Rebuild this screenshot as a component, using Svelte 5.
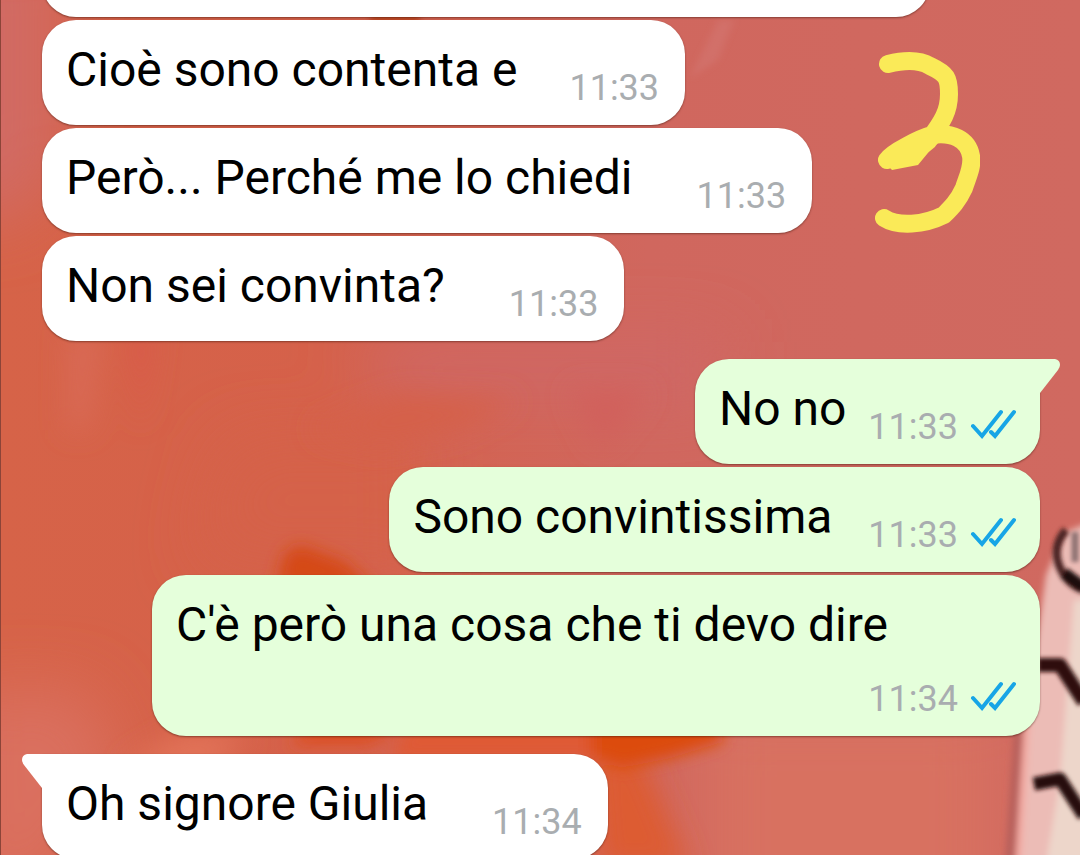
<script>
const messages = [
    { text: "Cioè sono contenta e", time: "11:33", gap: 52 },
    { text: "Però... Perché me lo chiedi", time: "11:33", gap: 64 },
    { text: "Non sei convinta?", time: "11:33", gap: 64 },
    { text: "No no", time: "11:33", gap: 22, sent: true, first: true },
    { text: "Sono convintissima", time: "11:33", gap: 36, sent: true },
    { text: "C'è però una cosa che ti devo dire", time: "11:34", gap: 28, sent: true, wrapped: true },
    { text: "Oh signore Giulia", time: "11:34", gap: 64, first: true }
];
</script>

<main>
    <svg class="wallpaper" viewBox="0 0 1080 855" preserveAspectRatio="none" aria-hidden="true">
        <defs>
            <linearGradient id="base" x1="0" y1="0" x2="1" y2="0">
                <stop offset="0" stop-color="#d66348" />
                <stop offset="0.3" stop-color="#d5614a" />
                <stop offset="0.6" stop-color="#d0675e" />
                <stop offset="1" stop-color="#d06960" />
            </linearGradient>
            <filter id="wide" x="-50%" y="-50%" width="200%" height="200%"><feGaussianBlur stdDeviation="32" /></filter>
            <filter id="soft" x="-30%" y="-30%" width="160%" height="160%"><feGaussianBlur stdDeviation="14" /></filter>
            <filter id="petal" x="-30%" y="-30%" width="160%" height="160%"><feGaussianBlur stdDeviation="8" /></filter>
            <filter id="edge" x="-30%" y="-30%" width="160%" height="160%"><feGaussianBlur stdDeviation="3" /></filter>
            <filter id="line" x="-30%" y="-30%" width="160%" height="160%"><feGaussianBlur stdDeviation="2" /></filter>
        </defs>
        <rect width="1080" height="855" fill="url(#base)" />
        <g filter="url(#wide)">
            <path d="M-60-60H60V160L20 220H-60z" fill="#d16a63" />
            <path d="M350 340H720V400H400z" fill="#cf6866" />
            <path d="M230 440H420V560H200z" fill="#d5624a" />
            <path d="M-40 690H90L120 780 40 900H-40z" fill="#da6f5f" />
            <path d="M700 700H1000V930H700z" fill="#d87161" />
        </g>
        <g filter="url(#soft)">
            <path d="M70 330H100L88 430H68z" fill="#d96b56" />
            <path d="M128 330H155L140 430z" fill="#d95a48" />
            <path d="M310 430L400 395 520 400 460 430 380 445z" fill="#d5604a" />
            <path d="M570 390H650L600 450z" fill="#d1615b" />
            <path d="M180 735H250L210 770H120z" fill="#e3745a" />
            <path d="M590 750H640L690 870H600z" fill="#dd5b33" />
        </g>
        <g filter="url(#petal)">
            <path d="M276 585L285 553 300 545 345 562 375 590z" fill="#d54a18" />
            <path d="M310 720H410L370 745H290z" fill="#dc4f20" />
            <path d="M410 720H610L600 760H390z" fill="#df5a36" />
            <path d="M590 710H724L722 742 670 758 620 768 590 755z" fill="#dc4c10" />
        </g>
        <g filter="url(#edge)">
            <path d="M370 14H420V22H370z" fill="#b9431d" />
            <path d="M718 20H734L718 60 690 78z" fill="#d27069" />
            <path d="M1014 730H1028L1018 860H1005z" fill="#b8605b" />
            <path d="M1037 640L1046 575 1064 533 1090 522V870H1017L1024 740z" fill="#ecbcb6" />
            <path d="M1074 600H1090V870H1045L1060 780z" fill="#edd6ca" />
            <path d="M1027 720L1018 865" stroke="#f3a9a1" stroke-width="6" />
        </g>
        <g class="marks" filter="url(#line)">
            <path d="M1066 530Q1052 546 1059 565T1084 590" stroke="#4a2220" stroke-width="8" />
            <path d="M1064 573L1084 588" stroke="#1f1010" stroke-width="12" />
            <path d="M1075 532V562" stroke="#8d7171" stroke-width="7" />
            <path d="M1038 665H1060L1084 702" stroke="#2d0d0b" stroke-width="14" />
            <path d="M1034 784L1060 779 1084 816" stroke="#28100e" stroke-width="13" />
        </g>
        <rect width="1" height="855" fill="#8c4438" />
    </svg>

    <ol class="chat">
        <li class="message previous"></li>
        {#each messages as message}
        <li class="message" class:sent={message.sent} class:first={message.first} class:wrapped={message.wrapped} style:gap="{message.gap}px">
            {#if message.first}
            <svg class="tail" width="21" height="35" viewBox="0 0 21 35" aria-hidden="true">
                <path d="M0 0H15Q20 1 20 6Q20 8 18 11L0 34z" />
            </svg>
            {/if}
            <p>{message.text}</p>
            <div class="meta">
                <time>{message.time}</time>
                {#if message.sent}
                <svg class="ticks" width="46" height="36" viewBox="0 0 46 36" role="img" aria-label="Letto">
                    <path d="M3 17L12 27L31 3M21 23L25 27L44 3" />
                </svg>
                {/if}
            </div>
        </li>
        {/each}
    </ol>

    <svg class="drawing" width="110" height="185" viewBox="0 0 110 185" aria-hidden="true">
        <path d="M18 15C34 11 50 11 60 17C77 25 79 29 79 45C79 62 73 72 58 92C49 100 34 107 17 111C22 103 51 89 62 86C82 83 98 90 101 107C103 118 97 129 94 139C88 152 82 158 74 166C54 176 28 178 14 169" />
        <path class="fill" d="M10 108L48 84 77 87 62 99 48 116 22 121z" />
    </svg>
</main>

<style>
:global(body) {
    margin: 0;
}

main {
    position: relative;
    height: 100vh;
    overflow: hidden;
    background-color: #d2665a;
    font-family: Roboto, sans-serif;
}

.wallpaper {
    position: absolute;
    inset: 0;
    width: 100%;
    height: 100%;
}

.marks {
    fill: none;
    stroke-linejoin: round;
}

.chat {
    position: relative;
    display: flex;
    flex-direction: column;
    align-items: flex-start;
    gap: 3px;
    margin: 0;
    padding: 0 40px 0 42px;
    list-style: none;
}

.message {
    position: relative;
    display: flex;
    align-items: flex-end;
    box-sizing: border-box;
    min-height: 105px;
    padding: 22px 26px 19px 24px;
    border-radius: 34px;
    background-color: #fff;
    box-shadow: 0 1px 2px rgba(60, 20, 10, 0.5);
}

.previous {
    width: 89%;
    margin-top: -88px;
}

.sent {
    align-self: flex-end;
    padding-right: 24px;
    background-color: #e5ffdb;
}

.first {
    margin-top: 15px;
    border-top-left-radius: 0;
}

.first.sent {
    border-top-left-radius: 34px;
    border-top-right-radius: 0;
}

.wrapped {
    flex-direction: column;
}

.tail {
    position: absolute;
    top: 0;
    right: 100%;
    fill: #fff;
    transform: scaleX(-1);
}

.sent .tail {
    right: auto;
    left: 100%;
    fill: #e5ffdb;
    transform: none;
}

p {
    align-self: flex-start;
    margin: 0;
    color: #000;
    font-size: 48px;
    line-height: 56px;
    white-space: nowrap;
}

.wrapped p {
    padding-right: 128px;
}

.meta {
    display: flex;
    align-items: center;
    gap: 12px;
    height: 36px;
}

time {
    color: #a9adb0;
    font-size: 36px;
    line-height: 36px;
}

.ticks {
    fill: none;
    stroke: #17a5e6;
    stroke-width: 4;
    stroke-linecap: round;
}

.drawing {
    position: absolute;
    top: 49px;
    right: 100px;
    fill: none;
    stroke: #faea58;
    stroke-width: 18;
    stroke-linecap: round;
    stroke-linejoin: round;
}

.fill {
    fill: #faea58;
    stroke: none;
}
</style>
